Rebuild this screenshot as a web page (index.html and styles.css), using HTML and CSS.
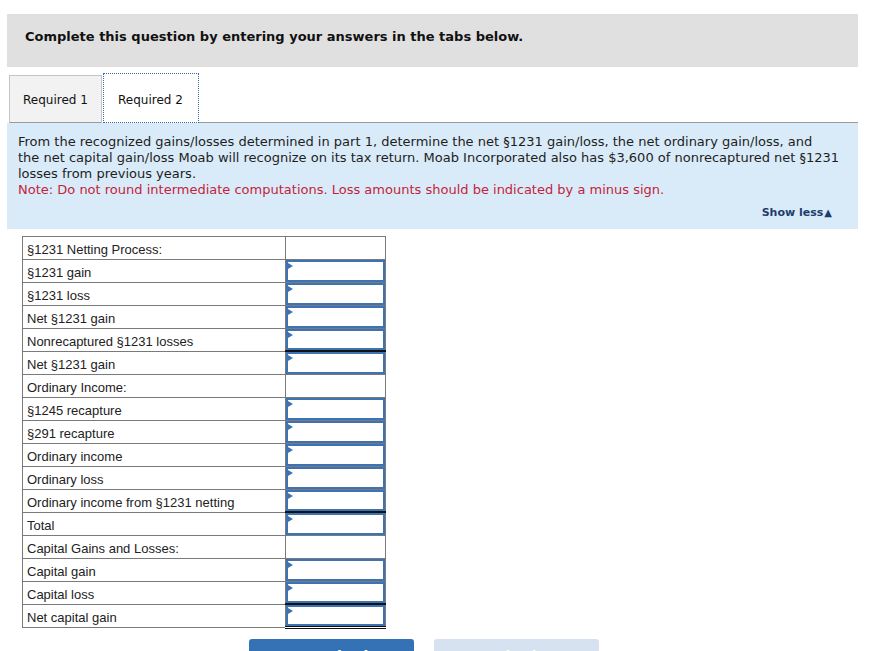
FILE: index.html
```html
<!DOCTYPE html>
<html>
<head>
<meta charset="utf-8">
<link rel="stylesheet" href="styles.css">
</head>
<body>
<div class="page">
  <div class="header">Complete this question by entering your answers in the tabs below.</div>
  <div class="tabs">
    <div class="tab tab-inactive">Required 1</div>
    <div class="tab tab-active">Required 2</div>
    <div class="tab-rest"></div>
  </div>
  <div class="info">
    <p class="q">From the recognized gains/losses determined in part 1, determine the net §1231 gain/loss, the net ordinary gain/loss, and<br>the net capital gain/loss Moab will recognize on its tax return. Moab Incorporated also has $3,600 of nonrecaptured net §1231<br>losses from previous years.</p>
    <p class="note">Note: Do not round intermediate computations. Loss amounts should be indicated by a minus sign.</p>
    <div class="showless">Show less<span class="tri">▲</span></div>
  </div>
  <table class="grid">
    <tr><td class="lbl">§1231 Netting Process:</td><td class="val empty"></td></tr>
    <tr><td class="lbl">§1231 gain</td><td class="val"><div class="inp"><span class="mark"></span></div></td></tr>
    <tr><td class="lbl">§1231 loss</td><td class="val"><div class="inp"><span class="mark"></span></div></td></tr>
    <tr><td class="lbl">Net §1231 gain</td><td class="val"><div class="inp"><span class="mark"></span></div></td></tr>
    <tr class="r-under"><td class="lbl">Nonrecaptured §1231 losses</td><td class="val under"><div class="inp"><span class="mark"></span></div></td></tr>
    <tr><td class="lbl">Net §1231 gain</td><td class="val"><div class="inp"><span class="mark"></span></div></td></tr>
    <tr><td class="lbl">Ordinary Income:</td><td class="val empty"></td></tr>
    <tr><td class="lbl">§1245 recapture</td><td class="val"><div class="inp"><span class="mark"></span></div></td></tr>
    <tr><td class="lbl">§291 recapture</td><td class="val"><div class="inp"><span class="mark"></span></div></td></tr>
    <tr><td class="lbl">Ordinary income</td><td class="val"><div class="inp"><span class="mark"></span></div></td></tr>
    <tr><td class="lbl">Ordinary loss</td><td class="val"><div class="inp"><span class="mark"></span></div></td></tr>
    <tr class="r-under"><td class="lbl">Ordinary income from §1231 netting</td><td class="val under"><div class="inp"><span class="mark"></span></div></td></tr>
    <tr><td class="lbl">Total</td><td class="val"><div class="inp"><span class="mark"></span></div></td></tr>
    <tr><td class="lbl">Capital Gains and Losses:</td><td class="val empty"></td></tr>
    <tr><td class="lbl">Capital gain</td><td class="val"><div class="inp"><span class="mark"></span></div></td></tr>
    <tr class="r-under"><td class="lbl">Capital loss</td><td class="val under"><div class="inp"><span class="mark"></span></div></td></tr>
    <tr class="r-dbl"><td class="lbl">Net capital gain</td><td class="val dbl"><div class="inp"><span class="mark"></span></div></td></tr>
  </table>
  <div class="buttons">
    <div class="btn btn-prev">&lt; Required 1</div>
    <div class="btn btn-next">Required 2 &gt;</div>
  </div>
</div>
</body>
</html>
```
FILE: styles.css
```css
html, body {
  margin: 0;
  padding: 0;
  background: #ffffff;
  overflow: hidden;
}
.page {
  width: 851px;
  margin-left: 7px;
  padding-top: 14px;
  font-family: "DejaVu Sans", Verdana, sans-serif;
  color: #1a1a1a;
}
.header {
  background: #e0e0e0;
  height: 53px;
  box-sizing: border-box;
  padding: 15px 0 0 18px;
  font-weight: bold;
  font-size: 13px;
  line-height: 16px;
  color: #111;
}
.tabs {
  display: flex;
  align-items: flex-end;
  margin-top: 6px;
  height: 50px;
}
.tab {
  box-sizing: border-box;
  font-size: 12px;
  line-height: 14px;
  color: #111;
}
.tab-inactive {
  margin-left: 2px;
  width: 93px;
  height: 48px;
  background: #f2f2f2;
  border: 1px solid #c4c4c4;
  border-bottom: 1px solid #9a9a9a;
  padding: 17px 0 0 13px;
}
.tab-active {
  margin-left: 1px;
  width: 96px;
  height: 50px;
  background: #ffffff;
  border: 1px dotted #3568ac;
  padding: 19px 0 0 14px;
}
.tab-rest {
  flex: 1;
  height: 1px;
  background: #9a9a9a;
}
.info {
  background: #d9ebf8;
  height: 106px;
  box-sizing: border-box;
  padding: 11px 0 0 11px;
  font-size: 13px;
  line-height: 16px;
}
.info p {
  margin: 0;
  white-space: nowrap;
}
.q {
  color: #1e1e1e;
}
.note {
  color: #c41f3b;
}
.showless {
  text-align: right;
  margin-top: 8px;
  padding-right: 26px;
  font-size: 11px;
  font-weight: bold;
  color: #1f3d6c;
  line-height: 14px;
}
.tri {
  font-size: 10px;
  margin-left: 1px;
}
.grid {
  margin: 7px 0 0 15px;
  border-collapse: collapse;
  font-family: "Liberation Sans", Arial, sans-serif;
  font-size: 13px;
}
.grid td {
  border: 1px solid #7a7a7a;
  height: 22px;
  padding: 0;
}
.grid td.lbl {
  width: 258px;
  padding-left: 4px;
  color: #222;
  line-height: 18px;
  vertical-align: bottom;
}
.val {
  width: 99px;
  vertical-align: top;
}
.inp {
  position: relative;
  height: 22px;
  box-sizing: border-box;
  border: 2px solid #3d72b5;
}
.mark {
  position: absolute;
  left: 0;
  top: 1px;
  width: 0;
  height: 0;
  border-top: 3px solid transparent;
  border-bottom: 3px solid transparent;
  border-left: 5px solid #3d72b5;
}
.grid td.under {
  border-bottom: 2px solid #111;
}
.grid .r-under td {
  height: 21px;
}
.grid .r-under .inp {
  height: 21px;
}
.grid td.dbl {
  border-bottom: 3px double #111;
}
.grid .r-dbl td {
  height: 21px;
}
.grid .r-dbl .inp {
  height: 21px;
}
.buttons {
  display: flex;
  gap: 20px;
  margin: 10px 0 0 242px;
}
.btn {
  width: 165px;
  height: 40px;
  border-radius: 3px 3px 0 0;
  font-family: "DejaVu Sans", Verdana, sans-serif;
  font-size: 14px;
  font-weight: bold;
  line-height: 17px;
  text-align: center;
  padding-top: 9px;
  box-sizing: border-box;
}
.btn-prev {
  background: #3571b5;
  color: #ffffff;
}
.btn-next {
  background: #d6e2f0;
  color: #ffffff;
}
```
